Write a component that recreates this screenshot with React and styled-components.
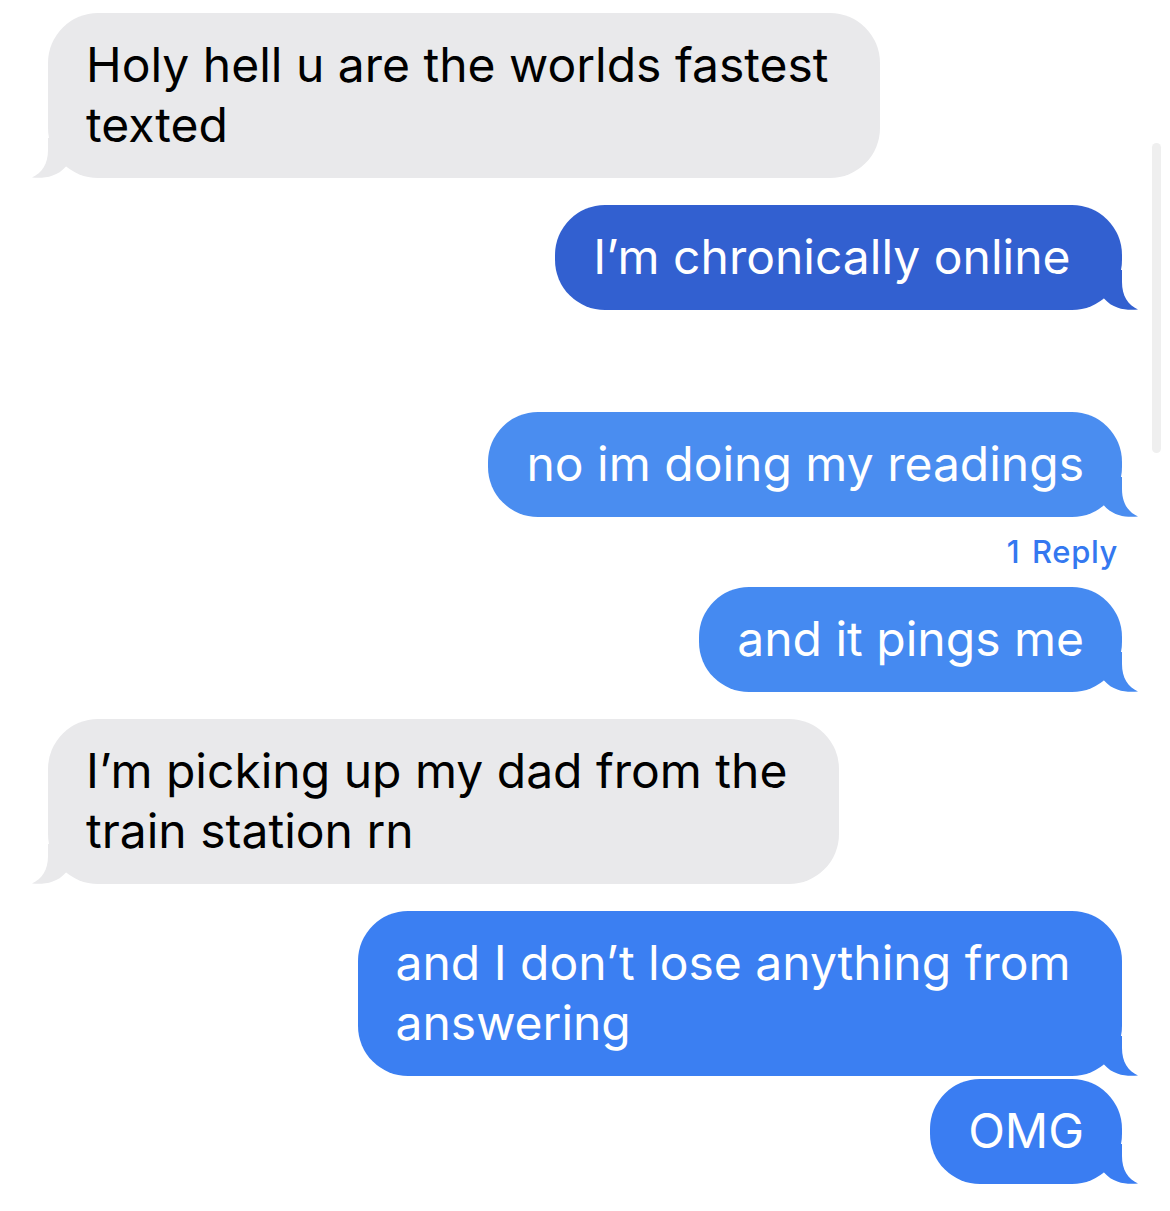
import styled, { createGlobalStyle } from 'styled-components';

const GlobalStyle = createGlobalStyle`
  html, body {
    margin: 0;
    padding: 0;
    background: #ffffff;
  }
  body {
    font-family: Inter, "Noto Sans", "Liberation Sans", sans-serif;
    -webkit-font-smoothing: antialiased;
  }
`;

const Page = styled.div`
  position: relative;
  width: 1170px;
  min-height: 1211px;
  box-sizing: border-box;
  padding: 13px 48px 27px;
  background: #ffffff;
`;

const Thread = styled.div`
  display: flex;
  flex-direction: column;
`;

const Row = styled.div`
  display: flex;
  justify-content: ${(p) => (p.$sent ? 'flex-end' : 'flex-start')};
  margin-top: ${(p) => p.$gap || 0}px;
`;

const Bubble = styled.div`
  position: relative;
  box-sizing: border-box;
  padding: 22px 38px 23px;
  border-radius: 50px;
  background: ${(p) => p.$bg};
  color: ${(p) => (p.$sent ? '#ffffff' : '#000000')};
  font-size: 48px;
  line-height: 60px;
  white-space: nowrap;
`;

const Tail = styled.svg`
  position: absolute;
  bottom: 0;
  width: 40px;
  height: 40px;
  ${(p) => (p.$sent ? 'right: -16px;' : 'left: -16px; transform: scaleX(-1);')}
`;

const ReplyLink = styled.div`
  display: flex;
  justify-content: flex-end;
  padding-right: 4px;
  margin-top: 17px;
  font-size: 31px;
  line-height: 36px;
  font-weight: 500;
  letter-spacing: 0.6px;
  word-spacing: 3px;
  color: #3478f0;
`;

const ScrollThumb = styled.div`
  position: absolute;
  top: 143px;
  right: 9px;
  width: 9px;
  height: 310px;
  border-radius: 5px;
  background: #efefef;
`;

const messages = [
  { sent: false, gap: 0, bg: '#e9e9eb', lines: ['Holy hell u are the worlds fastest\u00a0', 'texted'] },
  { sent: true, gap: 27, bg: '#3260d0', lines: ['I\u2019m chronically online\u00a0'] },
  { sent: true, gap: 102, bg: '#4a8df0', lines: ['no im doing my readings'], replies: 1 },
  { sent: true, gap: 17, bg: '#458af1', lines: ['and it pings me'] },
  { sent: false, gap: 27, bg: '#e9e9eb', lines: ['I\u2019m picking up my dad from the\u00a0', 'train station rn'] },
  { sent: true, gap: 27, bg: '#3b7ff2', lines: ['and I don\u2019t lose anything from\u00a0', 'answering'] },
  { sent: true, gap: 3, bg: '#3a7df2', lines: ['OMG'] },
];

function Message({ msg }) {
  return (
    <Bubble $sent={msg.sent} $bg={msg.bg}>
      {msg.lines.map((line, i) => (
        <div key={i}>{line}</div>
      ))}
      <Tail $sent={msg.sent} viewBox="0 0 40 40">
        <path
          d="M6 0 L24 0 L24 12 C24 26 30 35 40 39.5 C30 40.5 16 40 6 28.5 Z"
          fill={msg.bg}
        />
      </Tail>
    </Bubble>
  );
}

export default function App() {
  return (
    <>
      <GlobalStyle />
      <Page>
        <Thread>
          {messages.map((msg, i) => (
            <div key={i}>
              <Row $sent={msg.sent} $gap={msg.gap}>
                <Message msg={msg} />
              </Row>
              {msg.replies ? <ReplyLink>{msg.replies} Reply</ReplyLink> : null}
            </div>
          ))}
        </Thread>
        <ScrollThumb />
      </Page>
    </>
  );
}
